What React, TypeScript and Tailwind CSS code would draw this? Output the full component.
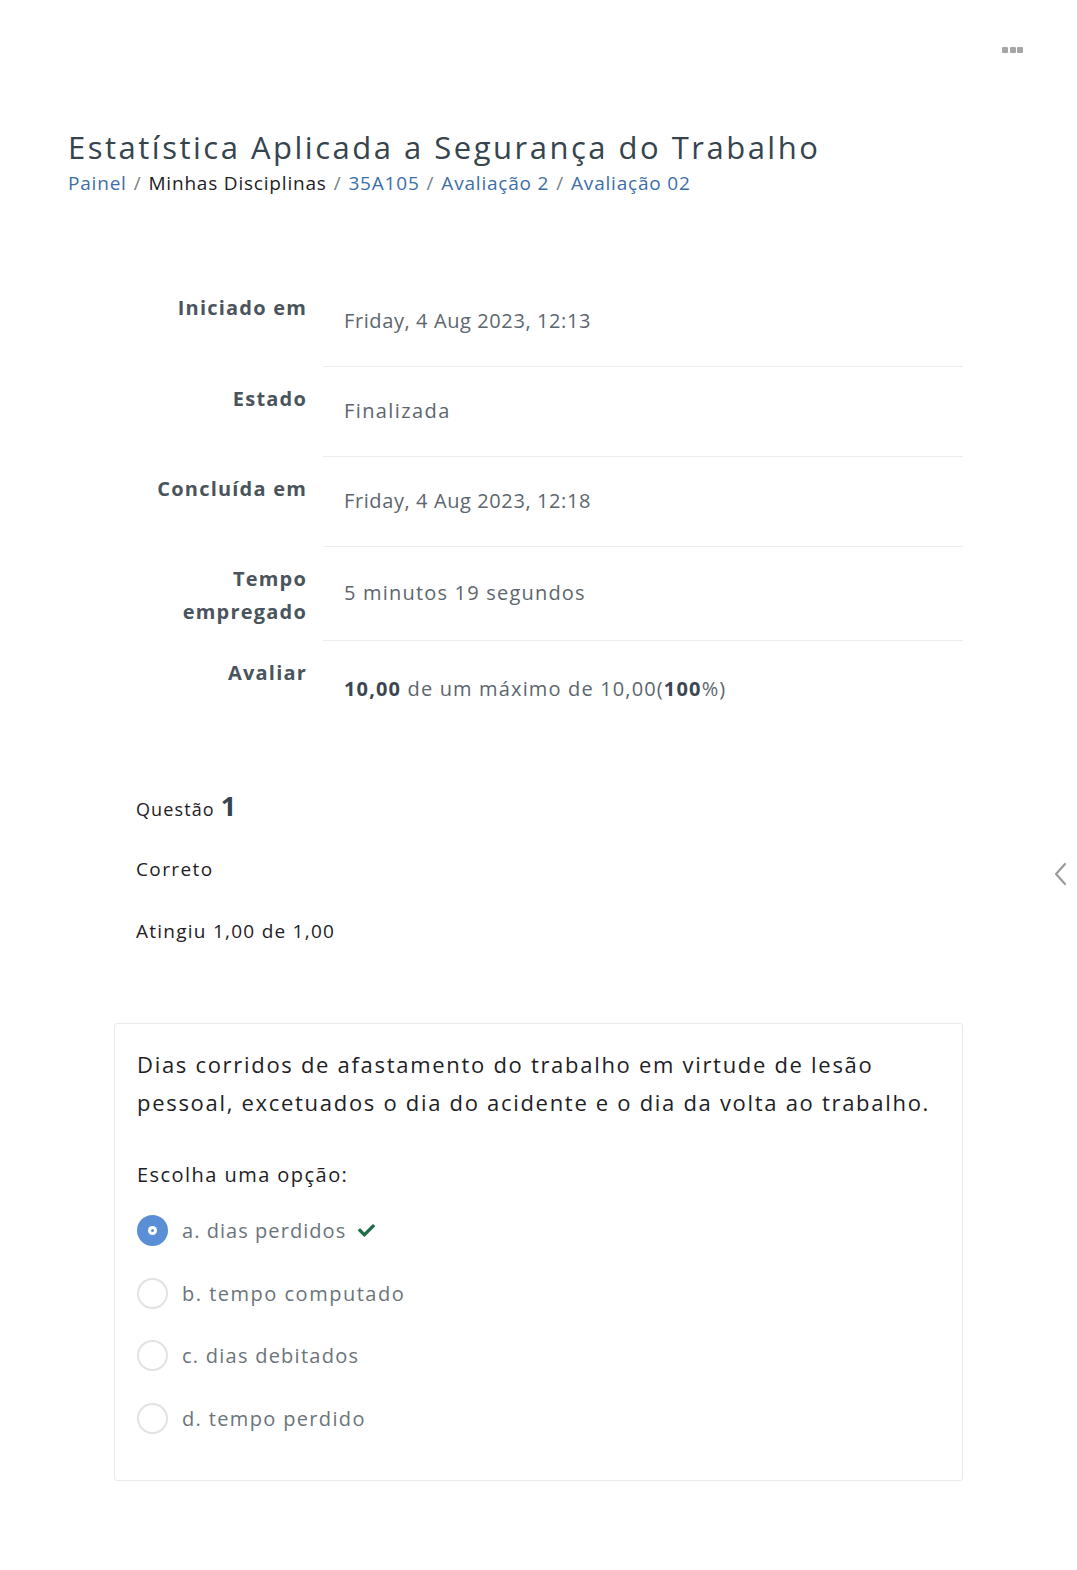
import React from "react";
import { FaCheck } from "react-icons/fa";

const rows: { label: React.ReactNode; value: React.ReactNode; track: string }[] = [
  { label: "Iniciado em", value: "Friday, 4 Aug 2023, 12:13", track: "tracking-[0.6px]" },
  { label: "Estado", value: "Finalizada", track: "tracking-[1.4px]" },
  { label: "Concluída em", value: "Friday, 4 Aug 2023, 12:18", track: "tracking-[0.6px]" },
  {
    label: (
      <>
        Tempo
        <br />
        empregado
      </>
    ),
    value: "5 minutos 19 segundos",
    track: "tracking-[1.2px]",
  },
  {
    label: "Avaliar",
    value: (
      <>
        <b className="font-bold text-[#3b4650]">10,00</b> de um máximo de 10,00(
        <b className="font-bold text-[#3b4650]">100</b>%)
      </>
    ),
    track: "tracking-[1.15px]",
  },
];

const options = [
  { text: "a. dias perdidos", selected: true, track: "tracking-[1.05px]" },
  { text: "b. tempo computado", track: "tracking-[1.5px]" },
  { text: "c. dias debitados", track: "tracking-[1.25px]" },
  { text: "d. tempo perdido", track: "tracking-[1.35px]" },
];

export default function App() {
  return (
    <div
      className="relative min-h-[1570px] bg-white text-[#1d2125]"
      style={{ fontFamily: '"Open Sans", "Liberation Sans", sans-serif' }}
    >
      <div className="flex justify-end pr-[54px] pt-[47px]">
        <div className="flex gap-[1.5px]">
          <span className="block h-[6px] w-[6px] rounded-[1px] bg-[#a5a5a5]" />
          <span className="block h-[6px] w-[6px] rounded-[1px] bg-[#a5a5a5]" />
          <span className="block h-[6px] w-[6px] rounded-[1px] bg-[#a5a5a5]" />
        </div>
      </div>

      <div className="px-[68px] pt-[75px]">
        <h1 className="text-[31px] leading-[38px] text-[#36444e] tracking-[2.5px]">
          Estatística Aplicada a Segurança do Trabalho
        </h1>
        <nav className="mt-[3px] flex items-center text-[19px] leading-[28px] tracking-[0.8px]">
          <span className="text-[#3c6ea7]">Painel</span>
          <span className="px-[7px] text-[#7a8288]">/</span>
          <span className="text-[#1d2125]">Minhas Disciplinas</span>
          <span className="px-[7px] text-[#7a8288]">/</span>
          <span className="text-[#3c6ea7]">35A105</span>
          <span className="px-[7px] text-[#7a8288]">/</span>
          <span className="text-[#3c6ea7]">Avaliação 2</span>
          <span className="px-[7px] text-[#7a8288]">/</span>
          <span className="text-[#3c6ea7]">Avaliação 02</span>
        </nav>

        <div className="ml-[46px] w-[849px]">
          <table className="mt-[79px] w-full border-collapse">
            <tbody>
              {rows.map((r, i) => (
                <tr key={i}>
                  <th className="w-[209px] pr-[16px] pt-[15px] pb-[13px] text-right align-top text-[20px] font-bold leading-[33px] tracking-[1.2px] text-[#4a545c]">
                    {r.label}
                  </th>
                  <td
                    className={`pl-[21px] align-middle text-[20px] leading-[34px] text-[#5c666e] ${r.track} ${
                      i === 0
                        ? "py-[28px]"
                        : i === rows.length - 1
                        ? "border-t border-[#ececec] pt-[31px] pb-[25px]"
                        : "border-t border-[#ececec] pt-[27px] pb-[28px]"
                    }`}
                  >
                    {r.value}
                  </td>
                </tr>
              ))}
            </tbody>
          </table>

          <div className="mt-[60px] pl-[22px]">
            <div className="flex items-end gap-[6px] text-[#1d2125]">
              <span className="text-[18px] leading-[24px] tracking-[1.1px]">Questão</span>
              <span className="text-[27px] font-bold leading-[30px] text-[#36444e]">1</span>
            </div>
            <div className="mt-[34px] text-[19px] leading-[28px] tracking-[1.4px]">Correto</div>
            <div className="mt-[34px] text-[19px] leading-[28px] tracking-[1.25px]">Atingiu 1,00 de 1,00</div>
          </div>

          <div className="mt-[78px] rounded-[3px] border border-[#e7eaec] px-[22px] pt-[21px] pb-[46px]">
            <p className="text-[22px] leading-[38px] tracking-[1.7px] text-[#1d2125]">
              Dias corridos de afastamento do trabalho em virtude de lesão pessoal, excetuados o dia do acidente e o dia da volta ao trabalho.
            </p>
            <div className="mt-[40px] text-[20px] leading-[28px] tracking-[1.45px] text-[#1d2125]">Escolha uma opção:</div>
            <div className="mt-[26px] flex flex-col gap-[31.5px]">
              {options.map((o, i) => (
                <div key={i} className="flex items-center gap-[14px]">
                  {o.selected ? (
                    <span className="flex h-[31px] w-[31px] items-center justify-center rounded-full bg-[#5b8fd5]">
                      <span className="flex h-[9px] w-[9px] items-center justify-center rounded-full bg-white">
                        <span className="block h-[3px] w-[3px] rounded-full bg-[#5b8fd5]" />
                      </span>
                    </span>
                  ) : (
                    <span className="block h-[31px] w-[31px] rounded-full border-[2px] border-[#e2e2e2]" />
                  )}
                  <span className={`text-[20px] leading-[31px] text-[#6b747b] ${o.track}`}>{o.text}</span>
                  {o.selected && <FaCheck className="-ml-[2px] text-[17px] text-[#1f6b4a]" />}
                </div>
              ))}
            </div>
          </div>
        </div>
      </div>

      <div className="absolute left-[1054px] top-[862px]">
        <svg width="14" height="24" viewBox="0 0 14 24" fill="none">
          <path d="M11 2 L2 12 L11 22" stroke="#9a9a9a" strokeWidth="2.2" strokeLinecap="round" strokeLinejoin="round" />
        </svg>
      </div>
    </div>
  );
}
